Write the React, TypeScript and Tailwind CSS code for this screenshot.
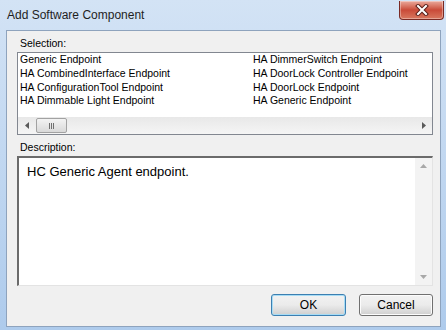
import React from "react";

const LEFT_ITEMS = [
  "Generic Endpoint",
  "HA CombinedInterface Endpoint",
  "HA ConfigurationTool Endpoint",
  "HA Dimmable Light Endpoint",
];

const RIGHT_ITEMS = [
  "HA DimmerSwitch Endpoint",
  "HA DoorLock Controller Endpoint",
  "HA DoorLock Endpoint",
  "HA Generic Endpoint",
];

function CloseButton() {
  return (
    <div className="mt-[1px] flex h-[19px] w-[45px] items-center justify-center rounded-b-[4px] border border-t-0 border-[#7a2a24] bg-gradient-to-b from-[#e9a99c] via-[#c94a38] to-[#d8775f] shadow-[inset_0_0_0_1px_rgba(255,255,255,0.35)]">
      <svg width="14" height="12" viewBox="0 0 14 12">
        <path d="M3 2 L11 10 M11 2 L3 10" stroke="#5a1f1a" strokeWidth="4" strokeLinecap="square" />
        <path d="M3 2 L11 10 M11 2 L3 10" stroke="#ffffff" strokeWidth="2" strokeLinecap="square" />
      </svg>
    </div>
  );
}

function HScrollbar() {
  return (
    <div className="flex h-[17px] items-center bg-gradient-to-b from-[#e8e8e8] to-[#f5f5f5]">
      <div className="flex w-[18px] justify-center">
        <svg width="4" height="7" viewBox="0 0 4 7">
          <path d="M4 0 L0 3.5 L4 7 Z" fill="#5a5a5a" />
        </svg>
      </div>
      <div className="flex h-[15px] w-[31px] items-center justify-center gap-[1px] rounded-[2px] border border-[#a2a2a2] bg-gradient-to-b from-[#f3f3f3] to-[#d9d9d9]">
        <span className="h-[6px] w-[1px] bg-[#707070]" />
        <span className="h-[6px] w-[1px] bg-[#707070]" />
        <span className="h-[6px] w-[1px] bg-[#707070]" />
      </div>
      <div className="flex-1" />
      <div className="flex w-[17px] justify-center">
        <svg width="4" height="7" viewBox="0 0 4 7">
          <path d="M0 0 L4 3.5 L0 7 Z" fill="#5a5a5a" />
        </svg>
      </div>
    </div>
  );
}

function VScrollbar() {
  return (
    <div className="flex w-[17px] flex-col items-center justify-between bg-[#f3f3f3] py-[6px]">
      <svg width="7" height="4" viewBox="0 0 7 4">
        <path d="M0 4 L3.5 0 L7 4 Z" fill="#a8a8a8" />
      </svg>
      <svg width="7" height="4" viewBox="0 0 7 4">
        <path d="M0 0 L3.5 4 L7 0 Z" fill="#a8a8a8" />
      </svg>
    </div>
  );
}

export default function App() {
  return (
    <div
      className="flex h-[330px] w-[446px] flex-col overflow-hidden bg-gradient-to-b from-[#d3e3f5] to-[#aecbec] text-[#000]"
      style={{ fontFamily: '"Liberation Sans", Arial, sans-serif' }}
    >
      {/* title bar */}
      <div className="flex h-[30px] items-start pl-[7px] pr-[2px]">
        <span className="mt-[7px] text-[12px] leading-[16px] text-[#1e1e1e]">
          Add Software Component
        </span>
        <div className="ml-auto">
          <CloseButton />
        </div>
      </div>

      {/* client area */}
      <div className="ml-[6px] mr-[5px] mb-[3px] flex flex-1 flex-col border border-[#8ea3bd] bg-[#f0f0f0] pl-[10px] pr-[7px] pt-[5px] pb-[10px] text-[10.5px]">
        <div className="pl-[3px] leading-[14px]">Selection:</div>

        <div className="mt-[2px] flex h-[83px] flex-col border border-[#828790] bg-white">
          <div className="flex h-[64px] leading-[13.75px]">
            <ul className="w-[235px] pl-[2px]">
              {LEFT_ITEMS.map((item) => (
                <li key={item}>{item}</li>
              ))}
            </ul>
            <ul>
              {RIGHT_ITEMS.map((item) => (
                <li key={item}>{item}</li>
              ))}
            </ul>
          </div>
          <HScrollbar />
        </div>

        <div className="mt-[5px] pl-[3px] leading-[14px]">Description:</div>

        <div className="mt-[2px] flex h-[130px] border-t-2 border-l-2 border-r border-b border-t-[#6b6b6b] border-l-[#6b6b6b] border-r-[#e3e3e3] border-b-[#e3e3e3] bg-white">
          <p className="flex-1 pl-[8px] pt-[6px] text-[13px] leading-[16px]">
            HC Generic Agent endpoint.
          </p>
          <VScrollbar />
        </div>

        {/* buttons */}
        <div className="mt-[8px] flex justify-end gap-[13px] text-[12px]">
          <button className="h-[22px] w-[75px] rounded-[3px] border border-[#3c7fb1] bg-gradient-to-b from-[#f2f2f2] via-[#ebebeb] to-[#cfcfcf] shadow-[inset_0_0_0_1px_#a7dcf5]">
            OK
          </button>
          <button className="h-[22px] w-[74px] rounded-[3px] border border-[#707070] bg-gradient-to-b from-[#f2f2f2] via-[#ebebeb] to-[#cfcfcf] shadow-[inset_0_0_0_1px_#fcfcfc]">
            Cancel
          </button>
        </div>
      </div>
    </div>
  );
}
